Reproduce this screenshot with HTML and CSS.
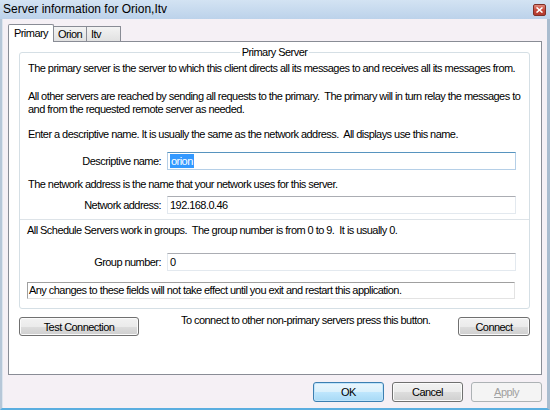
FILE: index.html
```html
<!DOCTYPE html>
<html>
<head>
<meta charset="utf-8">
<title>Server information for Orion,Itv</title>
<link rel="stylesheet" href="styles.css">
</head>
<body>
<div class="window">
  <div class="titlebar">
    <span class="title">Server information for Orion,Itv</span>
    <span class="close"><svg width="7" height="6" viewBox="0 0 7 6"><path d="M0.5 0.5 L6.5 5.5 M6.5 0.5 L0.5 5.5" stroke="#ffffff" stroke-width="1.6" fill="none"/></svg></span>
  </div>
  <div class="client">
    <div class="tabs">
      <div class="tab active">Primary</div>
      <div class="tab">Orion</div>
      <div class="tab">Itv</div>
    </div>
    <div class="panel">
      <fieldset class="group">
        <legend class="legend">Primary Server</legend>
        <div class="sec">
          <p class="txt p1">The primary server is the server to which this client directs all its messages to and receives all its messages from.</p>
          <p class="txt p2">All other servers are reached by sending all requests to the primary.&nbsp; The primary will in turn relay the messages to<br>and from the requested remote server as needed.</p>
          <p class="txt p3">Enter a descriptive name. It is usually the same as the network address.&nbsp; All displays use this name.</p>
          <div class="row r-desc">
            <span class="lbl">Descriptive name:</span>
            <span class="input focus"><span class="sel">orion</span></span>
          </div>
          <p class="txt p4">The network address is the name that your network uses for this server.</p>
          <div class="row r-net">
            <span class="lbl">Network address:</span>
            <span class="input">192.168.0.46</span>
          </div>
        </div>
        <div class="sep"></div>
        <div class="sec sec2">
          <p class="txt p5">All Schedule Servers work in groups.&nbsp; The group number is from 0 to 9.&nbsp; It is usually 0.</p>
          <div class="row r-grp">
            <span class="lbl">Group number:</span>
            <span class="input">0</span>
          </div>
          <div class="notice">Any changes to these fields will not take effect until you exit and restart this application.</div>
        </div>
      </fieldset>
      <div class="actions">
        <button class="btn btn-test">Test Connection</button>
        <span class="hint">To connect to other non-primary servers press this button.</span>
        <button class="btn btn-connect">Connect</button>
      </div>
    </div>
    <div class="footer">
      <button class="btn fbtn ok">OK</button>
      <button class="btn fbtn">Cancel</button>
      <button class="btn fbtn disabled" disabled><u>A</u>pply</button>
    </div>
  </div>
</div>
</body>
</html>
```

FILE: styles.css
```css
* { box-sizing: border-box; }
html, body { margin: 0; padding: 0; }
body {
  width: 550px;
  height: 410px;
  overflow: hidden;
  font-family: "Liberation Sans", Arial, sans-serif;
  font-size: 11px;
  letter-spacing: -0.55px;
  color: #000;
}
.window {
  width: 550px;
  height: 410px;
  display: flex;
  flex-direction: column;
  background: #f5f0f5;
}
.titlebar {
  height: 19px;
  flex: none;
  display: flex;
  align-items: center;
  background: linear-gradient(#d3e3f3, #bcd2ea);
  padding: 0 4px 0 3px;
}
.title {
  font-size: 12px;
  letter-spacing: 0;
  line-height: 19px;
  color: #000;
}
.close {
  margin-left: auto;
  width: 13px;
  height: 12px;
  margin-top: 1px;
  border: 1px solid #7e2f27;
  border-radius: 2px;
  background: linear-gradient(#e08a7c, #c4473a 50%, #b23a2e);
  display: flex;
  align-items: center;
  justify-content: center;
}
.close svg { display: block; }
.client {
  flex: 1;
  border-left: 2px solid #b6c7d8;
  border-right: 3px solid #a9bccf;
  border-bottom: 2px solid #5aaee0;
  box-shadow: inset 1px 0 0 #dde5ee;
  padding: 5px 0 0 6px;
}
.tabs {
  display: flex;
  align-items: flex-end;
  height: 17px;
}
.tab {
  height: 15px;
  line-height: 14px;
  border: 1px solid #898c95;
  border-bottom: none;
  background: linear-gradient(#f3f3f3, #e1e1e1);
  padding: 0 3px;
  margin-left: -1px;
  text-align: center;
}
.tab:nth-child(2) { width: 34px; }
.tab:nth-child(3) { width: 35px; text-align: left; padding-left: 4px; }
.tab.active {
  position: relative;
  z-index: 1;
  height: 18px;
  margin-bottom: -1px;
  margin-left: 0;
  width: 46px;
  background: #fff;
  line-height: 16px;
  border-radius: 2px 2px 0 0;
}
.panel {
  width: 534px;
  height: 334px;
  border: 1px solid #898c95;
  background: #fff;
  padding: 4px 0 0 10px;
}
.group {
  margin: 0;
  padding: 0 0 9px 0;
  width: 511px;
  min-width: 0;
  border: 1px solid #d5dfe5;
  border-radius: 3px;
}
.legend {
  margin: 0 auto;
  padding: 0 2px;
  line-height: 13px;
  font-size: 11px;
}
.sec { padding-left: 8px; }
.sec2 { padding-left: 7px; }
.txt {
  margin: 0;
  line-height: 13px;
  white-space: nowrap;
}
.p1 { margin-top: 3px; }
.p2 { margin-top: 15px; }
.p3 { margin-top: 12px; }
.p4 { margin-top: 8px; }
.p5 { margin-top: 4px; }
.row {
  display: flex;
  align-items: center;
  height: 18px;
  margin-left: -8px;
}
.sec2 .row { margin-left: -7px; }
.r-desc { margin-top: 11px; }
.r-net { margin-top: 5px; }
.r-grp { margin-top: 16px; }
.lbl {
  width: 141px;
  text-align: right;
  line-height: 13px;
  padding-top: 1px;
}
.input {
  margin-left: 6px;
  width: 349px;
  height: 18px;
  border: 1px solid #e3e9ef;
  border-top-color: #abadb3;
  line-height: 16px;
  padding-left: 2px;
  background: #fff;
}
.input.focus {
  border-color: #b5cfe7;
  border-top-color: #5794bf;
}
.sel {
  background: #3399ff;
  color: #fff;
  padding: 0 1px;
  display: inline-block;
  line-height: 14px;
}
.sep {
  height: 1px;
  background: #dde3e8;
  margin-top: 5px;
}
.notice {
  margin-top: 11px;
  width: 488px;
  height: 17px;
  border: 1px solid #a0a0a0;
  border-right-color: #e3e3e3;
  border-bottom-color: #e3e3e3;
  line-height: 15px;
  padding-left: 1px;
  white-space: nowrap;
}
.actions {
  display: flex;
  align-items: flex-start;
  width: 511px;
  margin-top: 8px;
}
.btn {
  font-family: "Liberation Sans", Arial, sans-serif;
  font-size: 11px;
  letter-spacing: -0.55px;
  color: #000;
  height: 19px;
  padding: 0;
  border: 1px solid #707070;
  border-radius: 3px;
  background: linear-gradient(#f2f2f2 0%, #ebebeb 50%, #dddddd 51%, #cfcfcf 100%);
  box-shadow: inset 0 0 0 1px #fbfbfb;
}
.btn-test { width: 120px; }
.hint {
  margin-left: 42px;
  margin-top: -3px;
  line-height: 13px;
  white-space: nowrap;
}
.btn-connect { width: 72px; margin-left: auto; }
.footer {
  display: flex;
  justify-content: flex-end;
  gap: 8px;
  width: 534px;
  margin-top: 7px;
}
.fbtn { width: 71px; height: 20px; }
.ok {
  border-color: #3c7fb1;
  background: linear-gradient(#eaf6fd 0%, #d9f0fc 50%, #bee6fd 51%, #a7d9f5 100%);
  box-shadow: inset 0 0 0 1px #bfe4fb;
}
.disabled {
  color: #a0a0a0;
  border-color: #adb2b5;
  background: #f4f4f4;
  box-shadow: none;
}
.disabled u { text-decoration: underline; }
```
